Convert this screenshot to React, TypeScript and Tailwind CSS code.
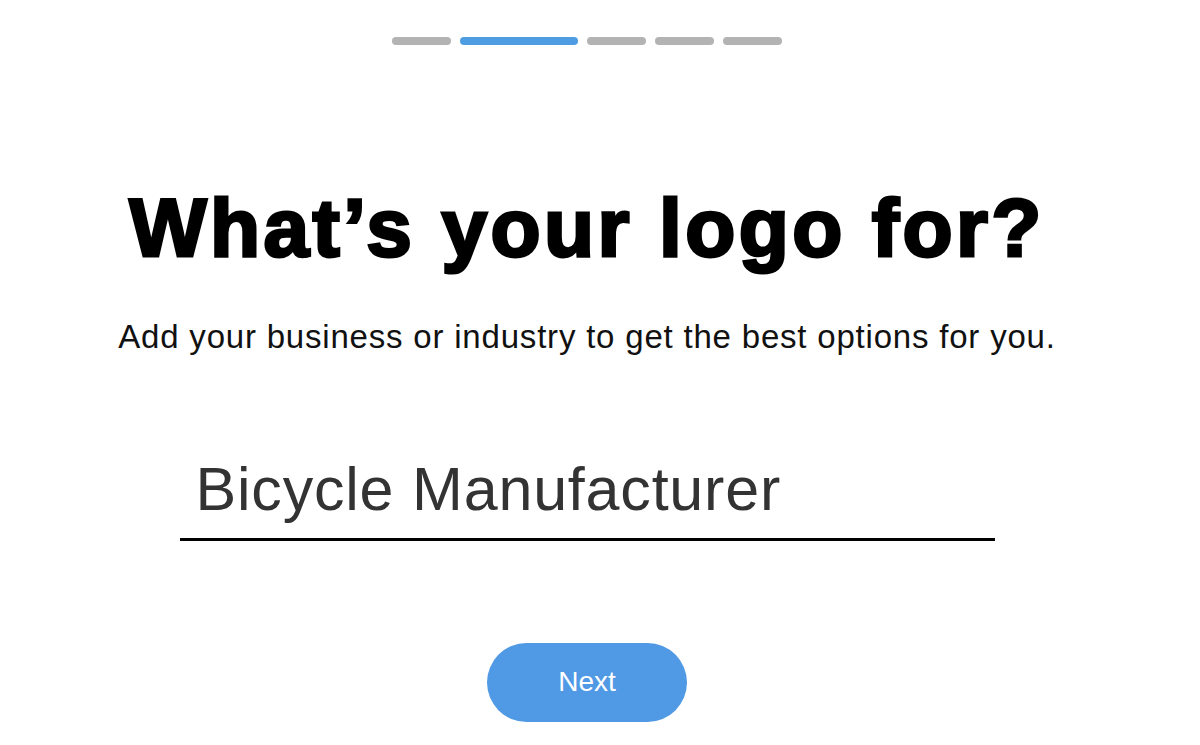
import { useState } from "react";

const steps = [
  { w: "w-[59px]", active: false },
  { w: "w-[118px]", active: true },
  { w: "w-[59px]", active: false },
  { w: "w-[59px]", active: false },
  { w: "w-[59px]", active: false },
];

export default function App() {
  const [value, setValue] = useState("Bicycle Manufacturer");

  return (
    <div className="min-h-[745px] w-[1200px] bg-white font-['Liberation_Sans',Arial,sans-serif]">
      <div className="flex w-[1174px] flex-col items-center">
        {/* step indicator */}
        <div className="mt-[37px] flex gap-[9px]">
          {steps.map((s, i) => (
            <div
              key={i}
              className={`h-[8px] rounded-full ${s.w} ${
                s.active ? "bg-[#4e9de3]" : "bg-[#b3b3b3]"
              }`}
            />
          ))}
        </div>

        <h1 className="mt-[142px] text-[82px] leading-[1] font-bold tracking-[3.4px] whitespace-nowrap text-black [-webkit-text-stroke:3px_black]">
          What’s your logo for?
        </h1>

        <p className="mt-[48px] text-[33px] leading-[1.2] tracking-[0.8px] whitespace-nowrap text-[#111]">
          Add your business or industry to get the best options for you.
        </p>

        {/* business input */}
        <div className="mt-[96px] w-[815px] border-b-[3px] border-black">
          <input
            value={value}
            onChange={(e) => setValue(e.target.value)}
            className="w-full bg-transparent px-[16px] pb-[12px] text-[61px] leading-[1.2] tracking-[0.8px] text-[#333] outline-none"
          />
        </div>

        <button
          type="button"
          className="mt-[102px] h-[79px] w-[200px] rounded-full bg-[#5099e5] text-[28px] text-white"
        >
          Next
        </button>
      </div>
    </div>
  );
}
